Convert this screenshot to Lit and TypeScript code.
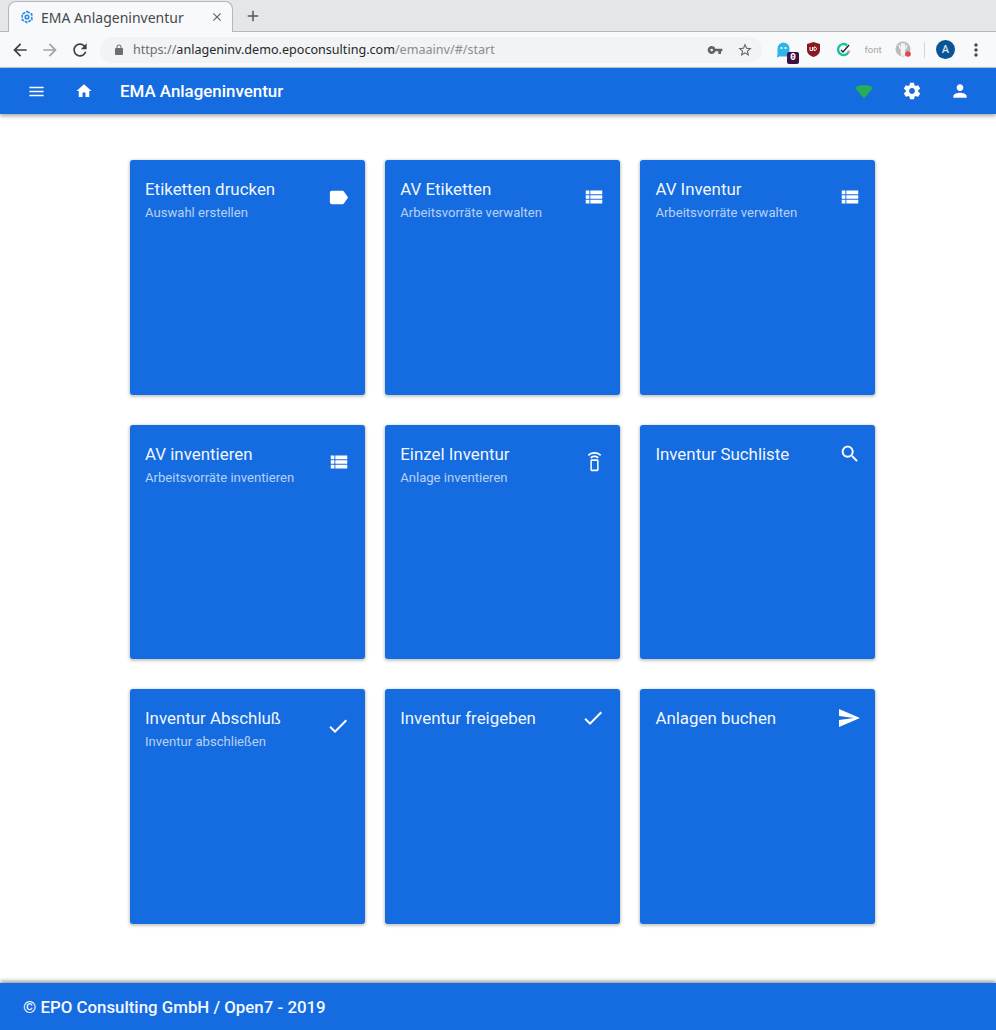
import { LitElement, html, css, svg } from "lit";
import { customElement } from "lit/decorators.js";

const P = {
  menu: "M3 18h18v-2H3v2zm0-5h18v-2H3v2zm0-7v2h18V6H3z",
  home: "M10 20v-6h4v6h5v-8h3L12 3 2 12h3v8z",
  settings: "M19.43 12.98c.04-.32.07-.64.07-.98s-.03-.66-.07-.98l2.11-1.65c.19-.15.24-.42.12-.64l-2-3.46c-.12-.22-.39-.3-.61-.22l-2.49 1c-.52-.4-1.08-.73-1.69-.98l-.38-2.65C14.46 2.18 14.25 2 14 2h-4c-.25 0-.46.18-.49.42l-.38 2.65c-.61.25-1.17.59-1.69.98l-2.49-1c-.23-.09-.49 0-.61.22l-2 3.46c-.13.22-.07.49.12.64l2.11 1.65c-.04.32-.07.65-.07.98s.03.66.07.98l-2.11 1.65c-.19.15-.24.42-.12.64l2 3.46c.12.22.39.3.61.22l2.49-1c.52.4 1.08.73 1.69.98l.38 2.65c.03.24.24.42.49.42h4c.25 0 .46-.18.49-.42l.38-2.65c.61-.25 1.17-.59 1.69-.98l2.49 1c.23.09.49 0 .61-.22l2-3.46c.12-.22.07-.49-.12-.64l-2.11-1.65zM12 15.5c-1.93 0-3.5-1.57-3.5-3.5s1.57-3.5 3.5-3.5 3.5 1.57 3.5 3.5-1.57 3.5-3.5 3.5z",
  person: "M12 12c2.21 0 4-1.79 4-4s-1.79-4-4-4-4 1.79-4 4 1.79 4 4 4zm0 2c-2.67 0-8 1.34-8 4v2h16v-2c0-2.66-5.33-4-8-4z",
  label: "M17.63 5.84C17.27 5.33 16.67 5 16 5L5 5.01C3.9 5.01 3 5.9 3 7v10c0 1.1.9 1.99 2 1.99L16 19c.67 0 1.27-.33 1.63-.84L22 12l-4.37-6.16z",
  list: "M3 14h4v-4H3v4zm0 5h4v-4H3v4zM3 9h4V5H3v4zm5 5h13v-4H8v4zm0 5h13v-4H8v4zM8 5v4h13V5H8z",
  search: "M15.5 14h-.79l-.28-.27C15.41 12.59 16 11.11 16 9.5 16 5.91 13.09 3 9.5 3S3 5.91 3 9.5 5.91 16 9.5 16c1.61 0 3.09-.59 4.23-1.57l.27.28v.79l5 4.99L20.49 19l-4.99-5zm-6 0C7.01 14 5 11.99 5 9.5S7.01 5 9.5 5 14 7.01 14 9.5 11.99 14 9.5 14z",
  check: "M9 16.17L4.83 12l-1.42 1.41L9 19 21 7l-1.41-1.41z",
  send: "M2.01 21L23 12 2.01 3 2 10l15 2-15 2z",
  remote: "M8.800 9.500h6.400c.8 0 1.500.7 1.500 1.500v10.500c0 .8-.7 1.500-1.500 1.500H8.800c-.8 0-1.500-.7-1.500-1.500V11c0-.8.7-1.500 1.500-1.500zM9 11.300v9.900h6v-9.900H9zM7.050 7.050l1.410 1.410C9.370 7.560 10.620 7 12 7s2.630.560 3.540 1.460l1.410-1.410C15.680 5.780 13.930 5 12 5s-3.680.780-4.950 2.050zM12 1C8.960 1 6.210 2.230 4.220 4.220l1.410 1.410C7.260 4.010 9.510 3 12 3s4.740 1.010 6.360 2.640l1.410-1.410C17.790 2.230 15.040 1 12 1z",
  back: "M20 11H7.830l5.590-5.590L12 4l-8 8 8 8 1.410-1.410L7.830 13H20v-2z",
  fwd: "M12 4l-1.410 1.410L16.170 11H4v2h12.170l-5.580 5.590L12 20l8-8z",
  reload: "M17.650 6.350C16.200 4.900 14.210 4 12 4c-4.420 0-7.990 3.580-7.990 8s3.570 8 7.990 8c3.730 0 6.840-2.550 7.730-6h-2.080c-.82 2.330-3.040 4-5.650 4-3.310 0-6-2.690-6-6s2.690-6 6-6c1.660 0 3.140.690 4.220 1.780L13 11h7V4l-2.350 2.350z",
  lock: "M18 8h-1V6c0-2.760-2.240-5-5-5S7 3.240 7 6v2H6c-1.100 0-2 .9-2 2v10c0 1.100.9 2 2 2h12c1.100 0 2-.9 2-2V10c0-1.100-.9-2-2-2zM9 6c0-1.660 1.340-3 3-3s3 1.340 3 3v2H9V6z",
  key: "M12.650 10C11.830 7.670 9.610 6 7 6c-3.310 0-6 2.690-6 6s2.690 6 6 6c2.610 0 4.830-1.670 5.650-4H17v4h4v-4h2v-4H12.650zM7 14c-1.100 0-2-.9-2-2s.9-2 2-2 2 .9 2 2-.9 2-2 2z",
  star: "M22 9.240l-7.190-.62L12 2 9.190 8.630 2 9.240l5.460 4.730L5.820 21 12 17.270 18.180 21l-1.630-7.030L22 9.240zM12 15.400l-3.760 2.270 1-4.280-3.320-2.880 4.380-.38L12 6.100l1.710 4.040 4.380.38-3.320 2.880 1 4.280L12 15.400z",
  more: "M12 8c1.100 0 2-.9 2-2s-.9-2-2-2-2 .9-2 2 .9 2 2 2zm0 2c-1.100 0-2 .9-2 2s.9 2 2 2 2-.9 2-2-.9-2-2-2zm0 6c-1.100 0-2 .9-2 2s.9 2 2 2 2-.9 2-2-.9-2-2-2z",
  close: "M19 6.410L17.590 5 12 10.590 6.410 5 5 6.410 10.590 12 5 17.590 6.410 19 12 13.410 17.590 19 19 17.590 13.410 12z",
  plus: "M19 13h-6v6h-2v-6H5v-2h6V5h2v6h6v2z",
};

const icon = (d: string, size: number, cls = "") =>
  html`<svg class=${cls} width=${size} height=${size} viewBox="0 0 24 24" fill="currentColor">${svg`<path d=${d}></path>`}</svg>`;

const CARDS: [string, string, string, number][] = [
  ["Etiketten drucken", "Auswahl erstellen", P.label, 23],
  ["AV Etiketten", "Arbeitsvorräte verwalten", P.list, 22],
  ["AV Inventur", "Arbeitsvorräte verwalten", P.list, 22],
  ["AV inventieren", "Arbeitsvorräte inventieren", P.list, 22],
  ["Einzel Inventur", "Anlage inventieren", P.remote, 21],
  ["Inventur Suchliste", "", P.search, 22],
  ["Inventur Abschluß", "Inventur abschließen", P.check, 24],
  ["Inventur freigeben", "", P.check, 24],
  ["Anlagen buchen", "", P.send, 24],
];

@customElement("app-root")
export class AppRoot extends LitElement {
  static styles = css`
    :host {
      display: flex;
      flex-direction: column;
      height: 1030px;
      overflow: hidden;
      background: #fff;
      font-family: Roboto, "Liberation Sans", sans-serif;
    }
    svg { display: block; flex: none; }
    .strip {
      height: 31px;
      flex: none;
      background: #e4e6ea;
      border-bottom: 1px solid #b4b6b9;
      display: flex;
      align-items: flex-end;
      padding-left: 8px;
    }
    .tab {
      width: 225px;
      height: 31px;
      margin-bottom: -1px;
      box-sizing: border-box;
      background: #f8f9fa;
      border: 1px solid #b4b6b9;
      border-bottom: 0;
      border-radius: 8px 8px 0 0;
      display: flex;
      align-items: center;
      padding: 0 8px 0 11px;
      color: #45484c;
      font: 14px "Noto Sans", sans-serif;
    }
    .tab .title { flex: 1; margin-left: 7px; }
    .tab .fav { color: #2b8ae6; }
    .tab .x { color: #5f6368; }
    .newtab { color: #55585c; margin: 0 0 6px 11px; }
    .toolbar {
      height: 35px;
      flex: none;
      background: #f8f9fb;
      border-bottom: 1px solid #bcc8dc;
      display: flex;
      align-items: center;
      color: #3c4043;
    }
    .nav { margin-left: 10px; display: flex; gap: 10px; flex: none; }
    .nav .off { color: #a0a2a5; }
    .omni {
      margin-left: 10px;
      width: 662px;
      flex: none;
      height: 26px;
      background: #f1f3f4;
      border-radius: 13px;
      display: flex;
      align-items: center;
      padding: 0 9px 0 13px;
      box-sizing: border-box;
      font: 12.580px "Noto Sans", sans-serif;
      color: #6a6d71;
      white-space: nowrap;
    }
    .omni .url { flex: 1; margin-left: 8px; }
    .omni b { font-weight: 400; color: #26292c; }
    .omni .rest { color: #8a8d91; }
    .omni .acts { display: flex; gap: 14px; color: #5f6368; }
    .ext { display: flex; align-items: center; margin-left: 11px; gap: 10px; flex: none; }
    .ext .box { width: 20px; height: 20px; display: flex; align-items: center; justify-content: center; position: relative; }
    .badge {
      position: absolute;
      right: -6px;
      bottom: -4px;
      width: 12px;
      height: 12px;
      background: #3c1040;
      color: #fff;
      border-radius: 2px;
      font: 700 10px/12px "Liberation Mono", monospace;
      text-align: center;
    }
    .font { font: 9.500px Roboto, sans-serif; color: #a5a5a5; }
    .sep { width: 1px; height: 16px; background: #d3d6dc; margin: 0 1px; }
    .avatar {
      width: 19px;
      height: 19px;
      border-radius: 50%;
      background: #0b5394;
      color: #d6e4f2;
      font: 500 11px/19px Roboto, sans-serif;
      text-align: center;
    }
    .more { color: #45484c; margin-left: 1px; }
    header {
      height: 46px;
      flex: none;
      background: #156ce0;
      color: #fff;
      display: flex;
      align-items: center;
      box-shadow: 0 2px 4px rgba(0, 0, 0, .35);
      position: relative;
    }
    .hbtn { width: 48px; display: flex; justify-content: center; align-items: center; }
    .hleft { margin-left: 12px; display: flex; }
    .appname { font-size: 16.900px; font-weight: 500; margin-left: 12px; flex: 1; }
    .hright { display: flex; margin-right: 12px; }
    .wifi { color: #27ae50; }
    main {
      flex: none;
      display: grid;
      grid-template-columns: repeat(3, 234.800px);
      grid-auto-rows: 234.600px;
      gap: 30px 20.400px;
      padding: 46px 0 0 130px;
    }
    .card {
      background: #156ce0;
      color: #fff;
      border-radius: 3px;
      box-shadow: 0 1px 3px 1px rgba(0, 0, 0, .22);
      padding: 19px 14.500px 0 15px;
      box-sizing: border-box;
    }
    .chead {
      display: flex;
      justify-content: space-between;
      align-items: center;
    }
    .cic { margin-block: -4px; }
    .ct { font-size: 16.900px; line-height: 20px; color: rgba(255, 255, 255, .96); }
    .cs { font-size: 13.100px; line-height: 12px; margin: 8px 0 -4px; color: rgba(255, 255, 255, .7); }
    footer {
      margin-top: auto;
      height: 47px;
      flex: none;
      background: #156ce0;
      color: #f4f8fe;
      display: flex;
      align-items: center;
      padding-left: 23px;
      font-size: 16.850px;
      font-weight: 500;
      box-shadow: 0 -2px 4px rgba(0, 0, 0, .4);
    }
  `;

  render() {
    return html`
      <div class="strip">
        <div class="tab">
          <svg class="fav" width="14" height="14" viewBox="0 0 14 14" fill="none" stroke="currentColor" stroke-width="1.600">
            <path d="M7 1.500l4.800 2.800v5.400L7 12.500 2.200 9.700V4.300z" stroke-dasharray="3 1"></path>
            <circle cx="7" cy="7" r="1.800"></circle>
          </svg>
          <span class="title">EMA Anlageninventur</span>
          ${icon(P.close, 14, "x")}
        </div>
        ${icon(P.plus, 18, "newtab")}
      </div>
      <div class="toolbar">
        <div class="nav">
          ${icon(P.back, 20)}
          ${icon(P.fwd, 20, "off")}
          ${icon(P.reload, 20)}
        </div>
        <div class="omni">
          ${icon(P.lock, 12)}
          <span class="url">https://<b>anlageninv.demo.epoconsulting.com</b><span class="rest">/emaainv/#/start</span></span>
          <span class="acts">${icon(P.key, 16)}${icon(P.star, 16)}</span>
        </div>
        <div class="ext">
          <span class="box">
            <svg width="13" height="16" viewBox="0 0 13 16"><path d="M.5 6.500a6 6 0 0 1 12 0v5c0 2-1.500 3-3 3H2.500L0 15.500l.5-4z" fill="#2fb4e8"></path><circle cx="4.500" cy="6" r="1.100" fill="#fff"></circle><circle cx="8.500" cy="6" r="1.100" fill="#fff"></circle></svg>
            <span class="badge">0</span>
          </span>
          <span class="box">
            <svg width="15" height="17" viewBox="0 0 15 17"><path d="M7.500 1l6.500 2v6c0 3.500-3 6-6.500 7C4 15 1 12.500 1 9V3z" fill="#8b1a20"></path><path d="M4 6v3.500h2.500V6M8 6v3.500c2 0 2.500-1 2.500-1.800S10 6 8 6z" fill="none" stroke="#fff" stroke-width="1"></path></svg>
          </span>
          <span class="box">
            <svg width="15" height="15" viewBox="0 0 15 15" fill="none" stroke-width="2.400"><path d="M11 3.200A5.500 5.500 0 1 0 12.500 10" stroke="#15c39a"></path><path d="M5 8l2 2 6-7" stroke="#1d2b3a" stroke-width="1.500"></path><path d="M13 8.500l-.5 2" stroke="#ff8a8a"></path></svg>
          </span>
          <span class="box font">font</span>
          <span class="box">
            <svg width="17" height="17" viewBox="0 0 17 17"><circle cx="8" cy="8" r="7.500" fill="#b9bbbd"></circle><path d="M6.500 3h3v11h-3zM4 4l1.500 4M12 4l-1.500 4" stroke="#f3f3f3" stroke-width="1.400" fill="#f3f3f3"></path><circle cx="13" cy="13" r="2.800" fill="#e8434f"></circle></svg>
          </span>
          <span class="sep"></span>
          <span class="avatar">A</span>
          ${icon(P.more, 20, "more")}
        </div>
      </div>
      <header>
        <div class="hleft">
          <span class="hbtn">${icon(P.menu, 19)}</span>
          <span class="hbtn">${icon(P.home, 18)}</span>
        </div>
        <span class="appname">EMA Anlageninventur</span>
        <div class="hright">
          <span class="hbtn wifi">
            <svg width="24" height="24" viewBox="0 0 24 24" fill="currentColor"><path d="M12 19.500L3 8.800C5.400 7 8.600 6 12 6s6.600 1 9 2.800z"></path></svg>
          </span>
          <span class="hbtn">${icon(P.settings, 20)}</span>
          <span class="hbtn">${icon(P.person, 20)}</span>
        </div>
      </header>
      <main>
        ${CARDS.map(
          ([t, s, ic, size]) => html`
            <div class="card">
              <div class="chead">
                <div>
                  <div class="ct">${t}</div>
                  ${s ? html`<div class="cs">${s}</div>` : ""}
                </div>
                ${icon(ic, size, "cic")}
              </div>
            </div>
          `
        )}
      </main>
      <footer>© EPO Consulting GmbH / Open7 - 2019</footer>
    `;
  }
}
